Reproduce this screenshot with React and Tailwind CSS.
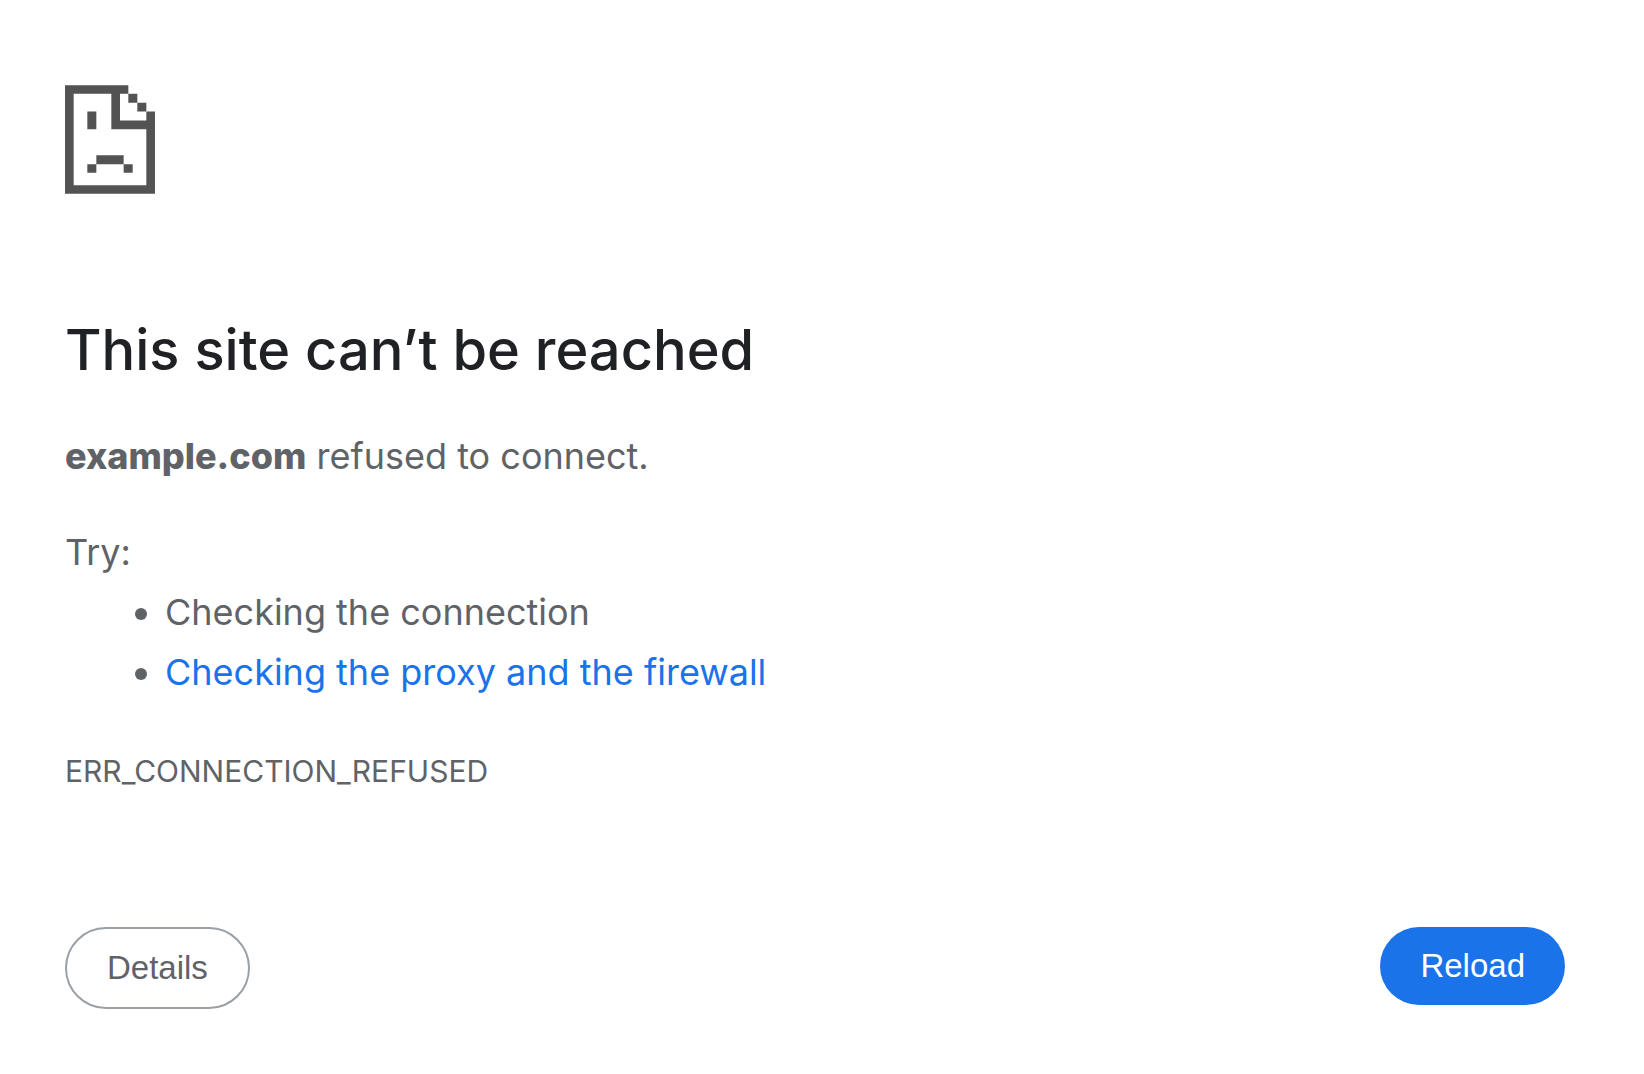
function SadPageIcon() {
  return (
    <svg
      viewBox="0 0 270 326"
      className="h-[109px] w-[90px] text-[#535353]"
      fill="currentColor"
      aria-hidden="true"
    >
      <path d="M0 0H190V26H26V300H244V132H139V26H165V106H244V79H270V326H0Z" />
      <path d="M190 26H217V53H190ZM217 53H244V79H217Z" />
      <path d="M67 79H94V132H67ZM94 210H176V237H94ZM67 237H94V263H67ZM176 237H203V263H176Z" />
    </svg>
  );
}

export default function App() {
  return (
    <main className="min-h-screen bg-white px-[65px] pt-[85px] pb-14 font-['Inter',sans-serif] text-4xl leading-[60px] text-[#5f6368]">
      <SadPageIcon />
      <h1 className="mt-[120px] text-[56px] leading-[72px] font-medium text-[#202124]">
        This site can’t be reached
      </h1>
      <p className="mt-10">
        <strong className="font-extrabold">example.com</strong> refused to
        connect.
      </p>
      <div className="mt-9">
        <p>Try:</p>
        <ul className="list-disc pl-[100px]">
          <li>Checking the connection</li>
          <li>
            <a href="#proxy" className="text-[#1a73e8]">
              Checking the proxy and the firewall
            </a>
          </li>
        </ul>
      </div>
      <p className="mt-11 text-[30px] leading-[50px]">
        ERR_CONNECTION_REFUSED
      </p>
      <div className="mt-[131px] flex items-start justify-between pr-[14px] font-['Liberation_Sans',sans-serif] text-[33px] leading-[38px]">
        <button
          type="button"
          className="rounded-full border-2 border-[#9aa0a6] px-10 py-5"
        >
          Details
        </button>
        <button
          type="button"
          className="rounded-full bg-[#1a73e8] px-10 py-5 text-white"
        >
          Reload
        </button>
      </div>
    </main>
  );
}
